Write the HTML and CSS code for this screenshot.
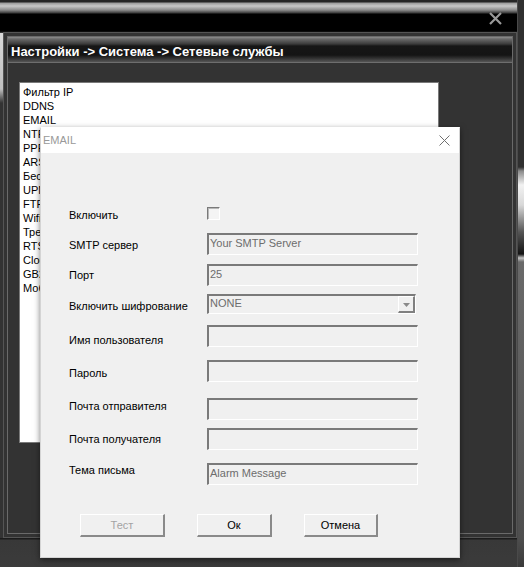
FILE: index.html
```html
<!DOCTYPE html>
<html lang="ru">
<head>
<meta charset="utf-8">
<title>EMAIL</title>
<link rel="stylesheet" href="styles.css">
</head>
<body>
<div class="screen">
  <div class="main">
    <div class="topbar">
      <svg class="topclose" viewBox="0 0 13 13" width="13" height="13"><path d="M1 1 L12 12 M12 1 L1 12" stroke="#9a9a9a" stroke-width="2.2" fill="none"/></svg>
    </div>
    <div class="frame">
      <div class="panel">
        <div class="crumb">Настройки -&gt; Система -&gt; Сетевые службы</div>
        <ul class="list">
          <li>Фильтр IP</li>
          <li>DDNS</li>
          <li>EMAIL</li>
          <li>NTP</li>
          <li>PPPoE</li>
          <li>ARSP</li>
          <li>Беспроводной модуль</li>
          <li>UPNP</li>
          <li>FTP</li>
          <li>Wifi</li>
          <li>Тревожный центр</li>
          <li>RTSP</li>
          <li>Cloud</li>
          <li>GB28181</li>
          <li>Мобильный мониторинг</li>
        </ul>
      </div>
    </div>
    <div class="bottom"></div>
  </div>
  <div class="rstrip"></div>
  <div class="leftglow"></div>

  <div class="dialog">
    <div class="dtitle">
      <span class="dname">EMAIL</span>
      <svg class="dclose" viewBox="0 0 11 11" width="11" height="11"><path d="M0.5 0.5 L10.5 10.5 M10.5 0.5 L0.5 10.5" stroke="#6f6f6f" stroke-width="1" fill="none"/></svg>
    </div>
    <div class="dbody">
      <div class="row"><span class="lbl">Включить</span><span class="check"></span></div>
      <div class="row"><span class="lbl">SMTP сервер</span><span class="field">Your SMTP Server</span></div>
      <div class="row"><span class="lbl">Порт</span><span class="field">25</span></div>
      <div class="row"><span class="lbl">Включить шифрование</span><span class="combo"><span class="cval">NONE</span><span class="cbtn"><svg viewBox="0 0 7 4" width="7" height="4"><path d="M0 0 L7 0 L3.5 4 Z" fill="#8a8a8a"/></svg></span></span></div>
      <div class="row"><span class="lbl">Имя пользователя</span><span class="field"></span></div>
      <div class="row"><span class="lbl">Пароль</span><span class="field"></span></div>
      <div class="row"><span class="lbl">Почта отправителя</span><span class="field"></span></div>
      <div class="row"><span class="lbl">Почта получателя</span><span class="field"></span></div>
      <div class="row"><span class="lbl">Тема письма</span><span class="field">Alarm Message</span></div>
      <div class="btns">
        <span class="btn btn-test disabled">Тест</span>
        <span class="btn btn-ok">Ок</span>
        <span class="btn btn-cancel">Отмена</span>
      </div>
    </div>
  </div>
</div>
</body>
</html>
```
FILE: styles.css
```css
* { box-sizing: border-box; }
html, body { margin: 0; padding: 0; }
body {
  width: 524px;
  height: 567px;
  overflow: hidden;
  background: #333;
  font-family: "Liberation Sans", Arial, sans-serif;
}
.screen {
  position: relative;
  width: 524px;
  height: 567px;
  display: flex;
}
.main {
  width: 517px;
  display: flex;
  flex-direction: column;
}
.topbar {
  height: 32px;
  flex: none;
  background: linear-gradient(#262626 0, #262626 2px, #9a9a9a 3px, #c8c8c8 6px, #8c8c8c 10px, #3a3a3a 13px, #000 14px, #000 31px, #1a1a1a 32px);
  display: flex;
  justify-content: flex-end;
  align-items: flex-start;
  padding: 12px 15px 0 0;
}
.topclose { display: block; }
.frame {
  height: 506px;
  flex: none;
  margin-left: 3px;
  border: 1px solid #555;
  padding: 3px;
  background: #333;
}
.panel {
  height: 100%;
  border: 1px solid #6a6a6a;
  background: #333;
  overflow: hidden;
}
.crumb {
  height: 26px;
  border-bottom: 1px solid #6e6e6e;
  background: linear-gradient(#8e8e8e 0, #6a6a6a 2px, #3a3a3a 7px, #161616 9px, #141414 18px, #2e2e2e 21px, #555 25px);
  color: #fff;
  font-weight: bold;
  font-size: 13px;
  line-height: 15px;
  padding: 7px 0 0 3px;
  white-space: nowrap;
}
.list {
  list-style: none;
  margin: 19px 0 0 11px;
  padding: 2px 0 0 3px;
  width: 420px;
  height: 361px;
  background: #fff;
  border: 1px solid #7a7a7a;
  font-size: 11px;
  line-height: 14px;
  color: #000;
  overflow: hidden;
}
.list li { white-space: nowrap; }
.bottom {
  flex: 1;
  background: linear-gradient(#1c1c1c 0, #1c1c1c 1px, #383838 2px, #3b3b3b 100%);
}
.rstrip {
  width: 7px;
  background: linear-gradient(#303030 0, #303030 167px, #8a8a8a 171px, #f2f2f2 185px, #d8d8d8 205px, #555 232px, #141414 254px, #c4c4c4 258px, #6a6a6a 262px, #4e4e4e 538px, #3a3a3a 567px);
  border-left: 1px solid #4a4a4a;
}
.leftglow {
  position: absolute;
  left: 0;
  top: 33px;
  width: 3px;
  height: 70px;
  background: linear-gradient(#d8d8d8, #c0c0c0 80%, rgba(80, 80, 80, 0));
}

/* Dialog */
.dialog {
  position: absolute;
  left: 40px;
  top: 127px;
  width: 420px;
  height: 431px;
  background: #f0f0f0;
  border: 1px solid #d4d4d4;
  border-top-color: #fff;
  box-shadow: 0 2px 6px rgba(0, 0, 0, 0.5);
  font-family: "Liberation Sans", Arial, sans-serif;
  font-size: 11px;
  color: #000;
}
.dtitle {
  height: 25px;
  background: #fff;
  display: flex;
  justify-content: space-between;
  align-items: flex-start;
  padding: 6px 9px 0 2px;
}
.dname {
  color: #999;
  font-size: 11px;
  line-height: 13px;
}
.dclose { display: block; margin-top: 1px; }
.dbody {
  padding: 0 0 0 28px;
}
.row {
  display: flex;
  align-items: flex-start;
  height: 22px;
}
.lbl {
  width: 138px;
  flex: none;
  line-height: 14px;
  white-space: nowrap;
}
.row:nth-child(1) { margin-top: 54px; height: 13px; }
.row:nth-child(1) .lbl { margin-top: 1px; }
.row:nth-child(2) { margin-top: 13px; }
.row:nth-child(2) .lbl { margin-top: 5px; }
.row:nth-child(3) { margin-top: 9px; }
.row:nth-child(3) .lbl { margin-top: 4px; }
.row:nth-child(4) { margin-top: 8px; height: 20px; }
.row:nth-child(4) .lbl { margin-top: 5px; }
.row:nth-child(5) { margin-top: 11px; }
.row:nth-child(5) .lbl { margin-top: 8px; }
.row:nth-child(6) { margin-top: 13px; }
.row:nth-child(6) .lbl { margin-top: 6px; }
.row:nth-child(7) { margin-top: 16px; }
.row:nth-child(7) .lbl { margin-top: 1px; }
.row:nth-child(8) { margin-top: 8px; }
.row:nth-child(8) .lbl { margin-top: 4px; }
.row:nth-child(9) { margin-top: 13px; }
.row:nth-child(9) .lbl { margin-top: 0; }

.check {
  width: 13px;
  height: 13px;
  border: 1px solid;
  border-color: #7a7a7a #fff #fff #7a7a7a;
  box-shadow: inset 1px 1px 0 #b8b8b8;
  background: #f4f4f4;
}
.field {
  width: 211px;
  height: 22px;
  border-style: solid;
  border-width: 2px 1px 1px 2px;
  border-color: #7a7a7a #fff #fff #7a7a7a;
  background: #f0f0f0;
  color: #6d6d6d;
  line-height: 16px;
  padding-left: 1px;
  white-space: nowrap;
  overflow: hidden;
}
.combo {
  width: 209px;
  height: 20px;
  border-style: solid;
  border-width: 2px 1px 1px 2px;
  border-color: #7a7a7a #fff #fff #7a7a7a;
  background: #f0f0f0;
  color: #6d6d6d;
  display: flex;
  align-items: flex-start;
  line-height: 15px;
  padding-left: 1px;
}
.cval { flex: 1; }
.cbtn {
  width: 17px;
  height: 17px;
  border-style: solid;
  border-width: 1px 2px 2px 1px;
  border-color: #fff #808080 #808080 #fff;
  background: #f0f0f0;
  display: flex;
  align-items: center;
  justify-content: center;
  padding-top: 1px;
}
.cbtn svg { display: block; }
.btns {
  display: flex;
  gap: 32px;
  margin-top: 29px;
  padding-left: 11px;
}
.btn {
  height: 23px;
  border-style: solid;
  border-width: 1px 2px 2px 1px;
  border-color: #fff #8a8a8a #8a8a8a #fff;
  background: #f0f0f0;
  text-align: center;
  line-height: 19px;
  padding-top: 1px;
  color: #000;
}
.btn-test { width: 85px; }
.btn-ok { width: 75px; }
.btn-cancel { width: 74px; }
.btn.disabled { color: #a3a3a3; }
```
